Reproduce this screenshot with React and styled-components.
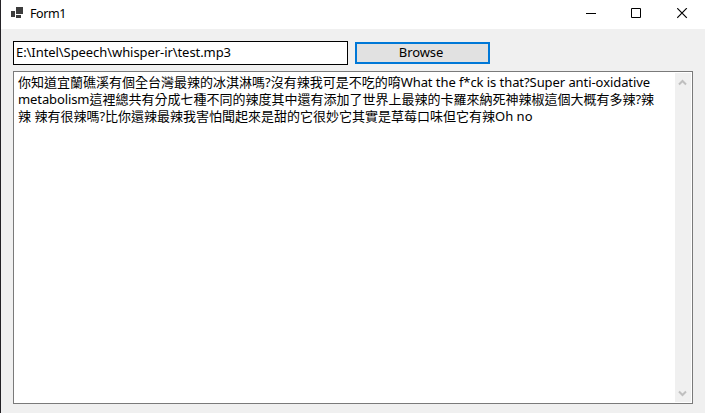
import React from 'react';
import styled, { createGlobalStyle } from 'styled-components';

const Global = createGlobalStyle`
  * { box-sizing: border-box; }
  body { margin: 0; overflow: hidden; }
`;
const Window = styled.div`
  width: 705px; height: 413px; display: flex; flex-direction: column;
  background: #f0f0f0; border-left: 1px solid #242226; color: #000;
  font: 400 13px/17px "Noto Sans", "Noto Sans CJK TC", sans-serif;
`;
const TitleBar = styled.header`
  height: 29px; flex: none; display: flex; align-items: center; background: #fff;
  padding: 0 17px 3px 10px;
`;
const Title = styled.span`
  flex: 1; margin-left: 6px; padding-top: 1px; font-size: 12.5px; letter-spacing: -0.4px;
`;
const WindowControls = styled.div`
  display: flex; gap: 35px;
`;
const ControlIcon = styled.svg`
  display: block; width: 11px; height: 11px; fill: none; stroke: #000;
`;
const Content = styled.main`
  flex: 1; display: flex; flex-direction: column; gap: 6px; padding: 12px 12px 9px 12px;
`;
const Toolbar = styled.div`
  display: flex; align-items: center; gap: 7px; height: 24px;
`;
const PathField = styled.div`
  width: 335px; height: 24px; border: 1px solid #000; background: #fff;
  padding: 2px 2px; white-space: pre;
`;
const BrowseButton = styled.button`
  width: 135px; height: 22px; padding: 0 3px 2px 0; border: 2px solid #0078d7; border-radius: 0;
  background: #e1e1e1; color: #000; font: inherit; line-height: 16px; letter-spacing: -0.1px;
`;
const TextArea = styled.section`
  flex: 1; display: flex; justify-content: space-between; background: #fff;
  border: 1px solid #7a7a7a; padding: 1px;
`;
const Lines = styled.div`
  padding: 1px 0 0 3px;
`;
const Line = styled.div`
  height: 17px; white-space: pre;
`;
const Run = styled.span`
  letter-spacing: ${(p) => p.$spacing || 0}px;
`;
const ScrollBar = styled.div`
  width: 16px; display: flex; flex-direction: column; align-items: center;
  justify-content: space-between; background: #f0f0f0; padding: 6px 1px 5px 0;
`;
const Arrow = styled.svg`
  width: 9px; height: 7px; fill: none; stroke: #bfbfbf; stroke-width: 2;
`;

export default function App() {
  return (
    <>
      <Global />
      <Window>
        <TitleBar>
          <svg width="13" height="12" viewBox="0 0 13 12" fill="#3c3c3c" shapeRendering="crispEdges">
            <path d="M5 0h7v7H5zM0 4h4v6H0zM5 8h5v3H5z" />
          </svg>
          <Title>Form1</Title>
          <WindowControls>
            <ControlIcon viewBox="0 0 11 11"><path d="M1 5.5h10" /></ControlIcon>
            <ControlIcon viewBox="0 0 11 11"><path d="M.5.5h9v9h-9z" /></ControlIcon>
            <ControlIcon viewBox="0 0 11 11"><path d="M.2.2l9.6 9.6M9.8.2L.2 9.8" strokeWidth="1.2" /></ControlIcon>
          </WindowControls>
        </TitleBar>
        <Content>
          <Toolbar>
            <PathField><Run $spacing={-0.07}>E:\Intel\Speech\whisper-ir\test.mp3</Run></PathField>
            <BrowseButton>Browse</BrowseButton>
          </Toolbar>
          <TextArea>
            <Lines>
              <Line>
                你知道宜蘭礁溪有個全台灣最辣的冰淇淋嗎?沒有辣我可是不吃的唷
                <Run $spacing={-0.07}>What the f*ck is that?Super anti-oxidative</Run>
              </Line>
              <Line>
                <Run $spacing={-0.1}>metabolism</Run>
                這裡總共有分成七種不同的辣度其中還有添加了世界上最辣的卡羅來納死神辣椒這個大概有多辣?辣
              </Line>
              <Line>
                辣 辣有很辣嗎?比你還辣最辣我害怕聞起來是甜的它很妙它其實是草莓口味但它有辣
                <Run>Oh no</Run>
              </Line>
            </Lines>
            <ScrollBar>
              <Arrow viewBox="0 0 9 7"><path d="M1 5.5l3.5-3.5 3.5 3.5" /></Arrow>
              <Arrow viewBox="0 0 9 7"><path d="M1 1.5l3.5 3.5 3.5-3.5" /></Arrow>
            </ScrollBar>
          </TextArea>
        </Content>
      </Window>
    </>
  );
}
